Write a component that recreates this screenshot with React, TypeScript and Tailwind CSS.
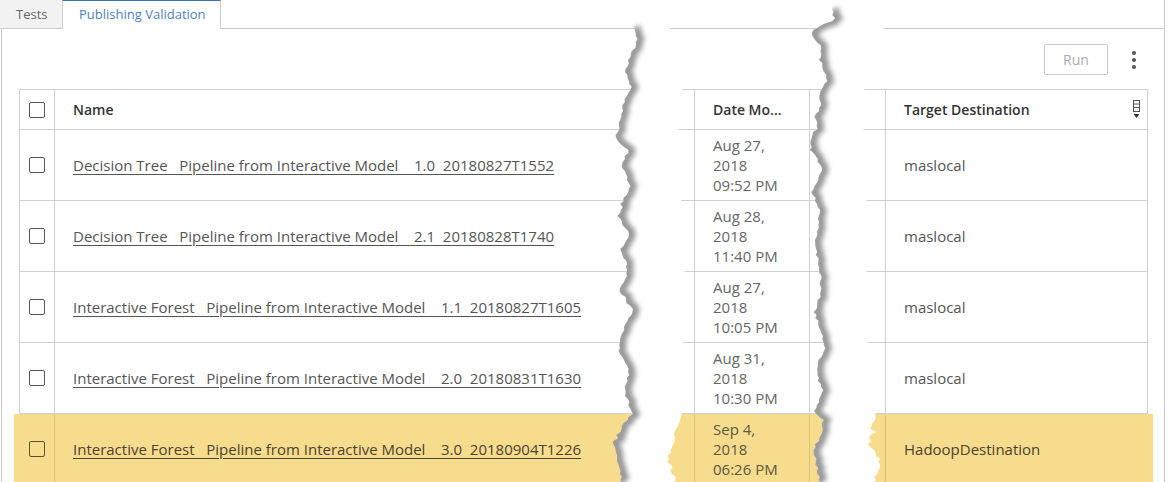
import { FC } from 'react';

interface Row {
  name: string;
  date: string[];
  target: string;
  selected?: boolean;
}

const rows: Row[] = [
  {
    name: 'Decision Tree   Pipeline from Interactive Model    1.0  20180827T1552',
    date: ['Aug 27,', '2018', '09:52 PM'],
    target: 'maslocal',
  },
  {
    name: 'Decision Tree   Pipeline from Interactive Model    2.1  20180828T1740',
    date: ['Aug 28,', '2018', '11:40 PM'],
    target: 'maslocal',
  },
  {
    name: 'Interactive Forest   Pipeline from Interactive Model    1.1  20180827T1605',
    date: ['Aug 27,', '2018', '10:05 PM'],
    target: 'maslocal',
  },
  {
    name: 'Interactive Forest   Pipeline from Interactive Model    2.0  20180831T1630',
    date: ['Aug 31,', '2018', '10:30 PM'],
    target: 'maslocal',
  },
  {
    name: 'Interactive Forest   Pipeline from Interactive Model    3.0  20180904T1226',
    date: ['Sep 4,', '2018', '06:26 PM'],
    target: 'HadoopDestination',
    selected: true,
  },
];

// small seeded random so the torn edges come out the same every time
const mulberry32 = (a: number) => () => {
  a |= 0;
  a = (a + 0x6d2b79f5) | 0;
  let t = Math.imul(a ^ (a >>> 15), 1 | a);
  t = (t + Math.imul(t ^ (t >>> 7), 61 | t)) ^ t;
  return ((t ^ (t >>> 14)) >>> 0) / 4294967296;
};

const interp = (anchors: number[][], y: number) => {
  for (let i = 0; i < anchors.length - 1; i++) {
    const [y0, x0] = anchors[i];
    const [y1, x1] = anchors[i + 1];
    if (y >= y0 && y <= y1) return x0 + ((x1 - x0) * (y - y0)) / (y1 - y0 || 1);
  }
  return anchors[anchors.length - 1][1];
};

const jagged = (anchors: number[][], seed: number, amp: number) => {
  const rnd = mulberry32(seed);
  const pts: number[][] = [];
  for (let y = 0; y <= 484; y += 3) {
    let x = interp(anchors, y) + (rnd() * 2 - 1) * amp;
    if (rnd() < 0.08) x += (rnd() * 2 - 1) * 4;
    pts.push([x, y]);
  }
  return pts;
};

const toStr = (pts: number[][]) => pts.map(([x, y]) => `${x.toFixed(1)},${y}`).join(' ');

interface TearProps {
  id: string;
  left: number[][];
  right: number[][];
  seed: number;
  shadowFrom: number;
}

const Tear: FC<TearProps> = ({ id, left, right, seed, shadowFrom }) => {
  const l = jagged(left, seed, 1.6);
  const r = jagged(right, seed + 7, 2.2);
  const gap = toStr([...l, ...[...r].reverse()]);
  const edge = toStr(l.filter(([, y]) => y >= shadowFrom));
  return (
    <g>
      <clipPath id={id}>
        <polygon points={gap} />
      </clipPath>
      <polygon points={gap} fill="#ffffff" />
      <g clipPath={`url(#${id})`}>
        <polyline
          points={edge}
          fill="none"
          stroke="#848484"
          strokeWidth="9"
          opacity="0.85"
          filter="url(#tearBlur)"
          transform="translate(2 0)"
        />
      </g>
    </g>
  );
};

const Checkbox: FC<{ selected?: boolean }> = ({ selected }) => (
  <div
    className={`w-[16px] h-[16px] rounded-[2px] border ${
      selected ? 'border-[#5b5030]' : 'border-[#555]'
    }`}
  />
);

const ColumnMenuIcon = () => (
  <svg width="9" height="19" viewBox="0 0 9 19">
    <rect x="1.5" y="0.5" width="6" height="11" fill="none" stroke="#555" />
    <line x1="1.5" y1="4" x2="7.5" y2="4" stroke="#555" />
    <line x1="1.5" y1="7.5" x2="7.5" y2="7.5" stroke="#555" />
    <polygon points="1.5,14 7.5,14 4.5,18" fill="#333" />
  </svg>
);

const App: FC = () => {
  return (
    <div
      className="relative w-[1172px] h-[482px] overflow-hidden bg-white text-[15px] text-[#555]"
      style={{ fontFamily: '"Open Sans", Lato, sans-serif' }}
    >
      {/* tab strip */}
      <div className="flex h-[29px] w-[1165px] text-[13px]">
        <div className="w-[62px] bg-[#f2f2f2] border-b border-[#ccc] pl-[16px] pt-[5px] text-[#666]">
          Tests
        </div>
        <div className="w-[159px] border-t border-t-[#3f6fb5] border-x border-x-[#ccc] pl-[16px] pt-[4px] text-[#4f7fc2]">
          Publishing Validation
        </div>
        <div className="flex-1 border-b border-r border-[#ccc]" />
      </div>

      {/* panel */}
      <div className="ml-[1px] w-[1164px] h-[460px] border-x border-[#ccc] pl-[17px]">
        <div className="w-[1129px]">
          <div className="flex justify-end items-center h-[60px] pt-[1px]">
            <button className="w-[64px] h-[31px] border border-[#ccc] rounded-[2px] text-[#aaa] text-[14px]">
              Run
            </button>
            <div className="w-[24px] ml-[14px] mr-[2px] flex flex-col items-center gap-[3px]">
              <span className="w-[4px] h-[4px] rounded-full bg-[#555]" />
              <span className="w-[4px] h-[4px] rounded-full bg-[#555]" />
              <span className="w-[4px] h-[4px] rounded-full bg-[#555]" />
            </div>
          </div>

          <div className="border-x border-t border-[#d0d0d0]">
            {/* header */}
            <div className="flex h-[40px] border-b border-[#d0d0d0] text-[#333] text-[14px] font-semibold">
              <div className="w-[35px] border-r border-[#d0d0d0] flex items-center justify-center">
                <Checkbox />
              </div>
              <div className="w-[640px] border-r border-[#d0d0d0] flex items-center px-[18px]">Name</div>
              <div className="w-[115px] border-r border-[#d0d0d0] flex items-center px-[18px] whitespace-nowrap">
                Date Mo...
              </div>
              <div className="w-[76px] border-r border-[#d0d0d0]" />
              <div className="w-[261px] flex items-center justify-between pl-[18px] pr-[6px]">
                <span>Target Destination</span>
                <ColumnMenuIcon />
              </div>
            </div>

            {rows.map((row) => {
              const line = row.selected ? 'border-[#d8c27f]' : 'border-[#d0d0d0]';
              return (
                <div
                  key={row.name}
                  className={`flex h-[71px] border-b ${
                    row.selected
                      ? '-mx-[6px] px-[6px] bg-[#f7dc8e] text-[#4a4330] border-[#d8c27f]'
                      : 'border-[#d0d0d0]'
                  }`}
                >
                  <div className={`w-[35px] shrink-0 border-r ${line} flex items-center justify-center`}>
                    <Checkbox selected={row.selected} />
                  </div>
                  <div className={`w-[640px] shrink-0 border-r ${line} flex items-center px-[18px]`}>
                    <span className="underline underline-offset-[3px] whitespace-pre">{row.name}</span>
                  </div>
                  <div
                    className={`w-[115px] shrink-0 border-r ${line} flex flex-col justify-center px-[18px] leading-[20px] whitespace-nowrap ${
                      row.selected ? 'text-[#5e5640]' : 'text-[#666]'
                    }`}
                  >
                    {row.date.map((d) => (
                      <span key={d}>{d}</span>
                    ))}
                  </div>
                  <div className={`w-[76px] shrink-0 border-r ${line}`} />
                  <div className="w-[261px] shrink-0 flex items-center px-[18px]">{row.target}</div>
                </div>
              );
            })}
          </div>
        </div>
      </div>

      {/* torn-paper gaps laid over the table */}
      <svg className="absolute left-0 top-0 pointer-events-none" width="1172" height="482" viewBox="0 0 1172 482">
        <defs>
          <filter id="tearBlur" x="-50%" y="-5%" width="200%" height="110%">
            <feGaussianBlur stdDeviation="2.6" />
          </filter>
        </defs>
        <Tear
          id="tear1"
          seed={11}
          shadowFrom={27}
          left={[
            [0, 628], [10, 622], [18, 630], [28, 634], [40, 637], [55, 631], [70, 625], [89, 631],
            [100, 625], [110, 622], [125, 620], [140, 615], [150, 628], [165, 622], [185, 630],
            [200, 624], [215, 618], [235, 630], [250, 622], [270, 628], [290, 620], [310, 632],
            [330, 624], [350, 618], [370, 630], [390, 624], [413, 632], [430, 620], [443, 613],
            [460, 618], [484, 622],
          ]}
          right={[
            [0, 670], [28, 670], [60, 676], [89, 683], [129, 680], [160, 684], [200, 680], [240, 678],
            [271, 684], [300, 680], [342, 682], [380, 678], [413, 683], [430, 676], [445, 672],
            [460, 668], [484, 676],
          ]}
        />
        <Tear
          id="tear2"
          seed={29}
          shadowFrom={8}
          left={[
            [0, 836], [8, 832], [20, 835], [28, 815], [35, 812], [45, 820], [60, 820], [80, 828],
            [89, 820], [95, 818], [105, 822], [115, 815], [125, 818], [140, 810], [150, 811],
            [170, 823], [190, 812], [215, 820], [240, 815], [265, 818], [290, 822], [310, 814],
            [330, 820], [350, 826], [370, 816], [390, 822], [410, 815], [430, 824], [450, 813],
            [470, 818], [484, 820],
          ]}
          right={[
            [0, 880], [28, 883], [60, 872], [89, 863], [129, 865], [160, 868], [200, 866], [240, 870],
            [271, 866], [300, 870], [342, 868], [380, 872], [413, 875], [440, 870], [460, 880],
            [484, 874],
          ]}
        />
      </svg>
    </div>
  );
};

export default App;
